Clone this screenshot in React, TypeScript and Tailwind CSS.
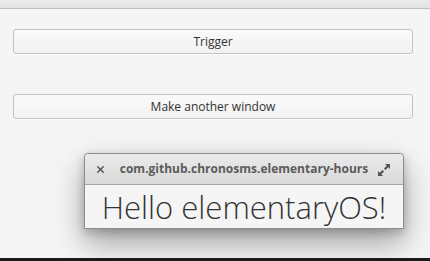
import { X } from "lucide-react";

const ExpandIcon = () => (
  <svg width="12" height="12" viewBox="0 0 12 12" fill="#555">
    <polygon points="7,0 12,0 12,5 10.3,3.3 7.5,6.1 5.9,4.5 8.7,1.7" />
    <polygon points="0,7 0,12 5,12 3.3,10.3 6.1,7.5 4.5,5.9 1.7,8.7" />
  </svg>
);

const Button = ({ label }: { label: string }) => (
  <button className="w-full h-[25px] rounded-[3px] border border-[#c3c3c3] bg-gradient-to-b from-[#fafafa] to-[#f2f2f2] text-[12px] text-[#333] shadow-[0_1px_0_rgba(255,255,255,0.8)]">
    {label}
  </button>
);

export default function App() {
  return (
    <div
      className="h-[261px] w-[430px] flex flex-col bg-[#f5f5f5] overflow-hidden"
      style={{ fontFamily: '"Open Sans", sans-serif' }}
    >
      <div className="h-[9px] shrink-0 bg-gradient-to-b from-[#ebebeb] to-[#e2e2e2] border-b border-[#bdbdbd]" />

      <div className="flex flex-col pl-[13px] pr-[17px] pt-[20px]">
        <Button label="Trigger" />
        <div className="h-[40px]" />
        <Button label="Make another window" />
      </div>

      <div className="ml-[84px] mt-[34px] w-[320px] rounded-t-[4px] border border-[#8c8c8c] bg-[#f5f5f5] shadow-[0_14px_30px_rgba(0,0,0,0.35),0_3px_10px_rgba(0,0,0,0.2)]">
        <div className="relative h-[31px] flex items-center justify-center rounded-t-[4px] bg-gradient-to-b from-[#ebebeb] to-[#d9d9d9] border-b border-[#a8a8a8]">
          <X className="absolute left-[10px] top-[10px] text-[#555]" size={11} strokeWidth={3.2} />
          <span className="text-[12px] font-bold text-[#5b5b5b]">
            com.github.chronosms.elementary-hours
          </span>
          <span className="absolute right-[13px] top-[10px]">
            <ExpandIcon />
          </span>
        </div>
        <div className="h-[43px] flex items-center justify-center">
          <span className="text-[31px] font-light text-[#333] leading-none pt-[2px]">
            Hello elementaryOS!
          </span>
        </div>
      </div>

      <div className="mt-auto h-[3px] bg-[#1b1b1b]" />
    </div>
  );
}
